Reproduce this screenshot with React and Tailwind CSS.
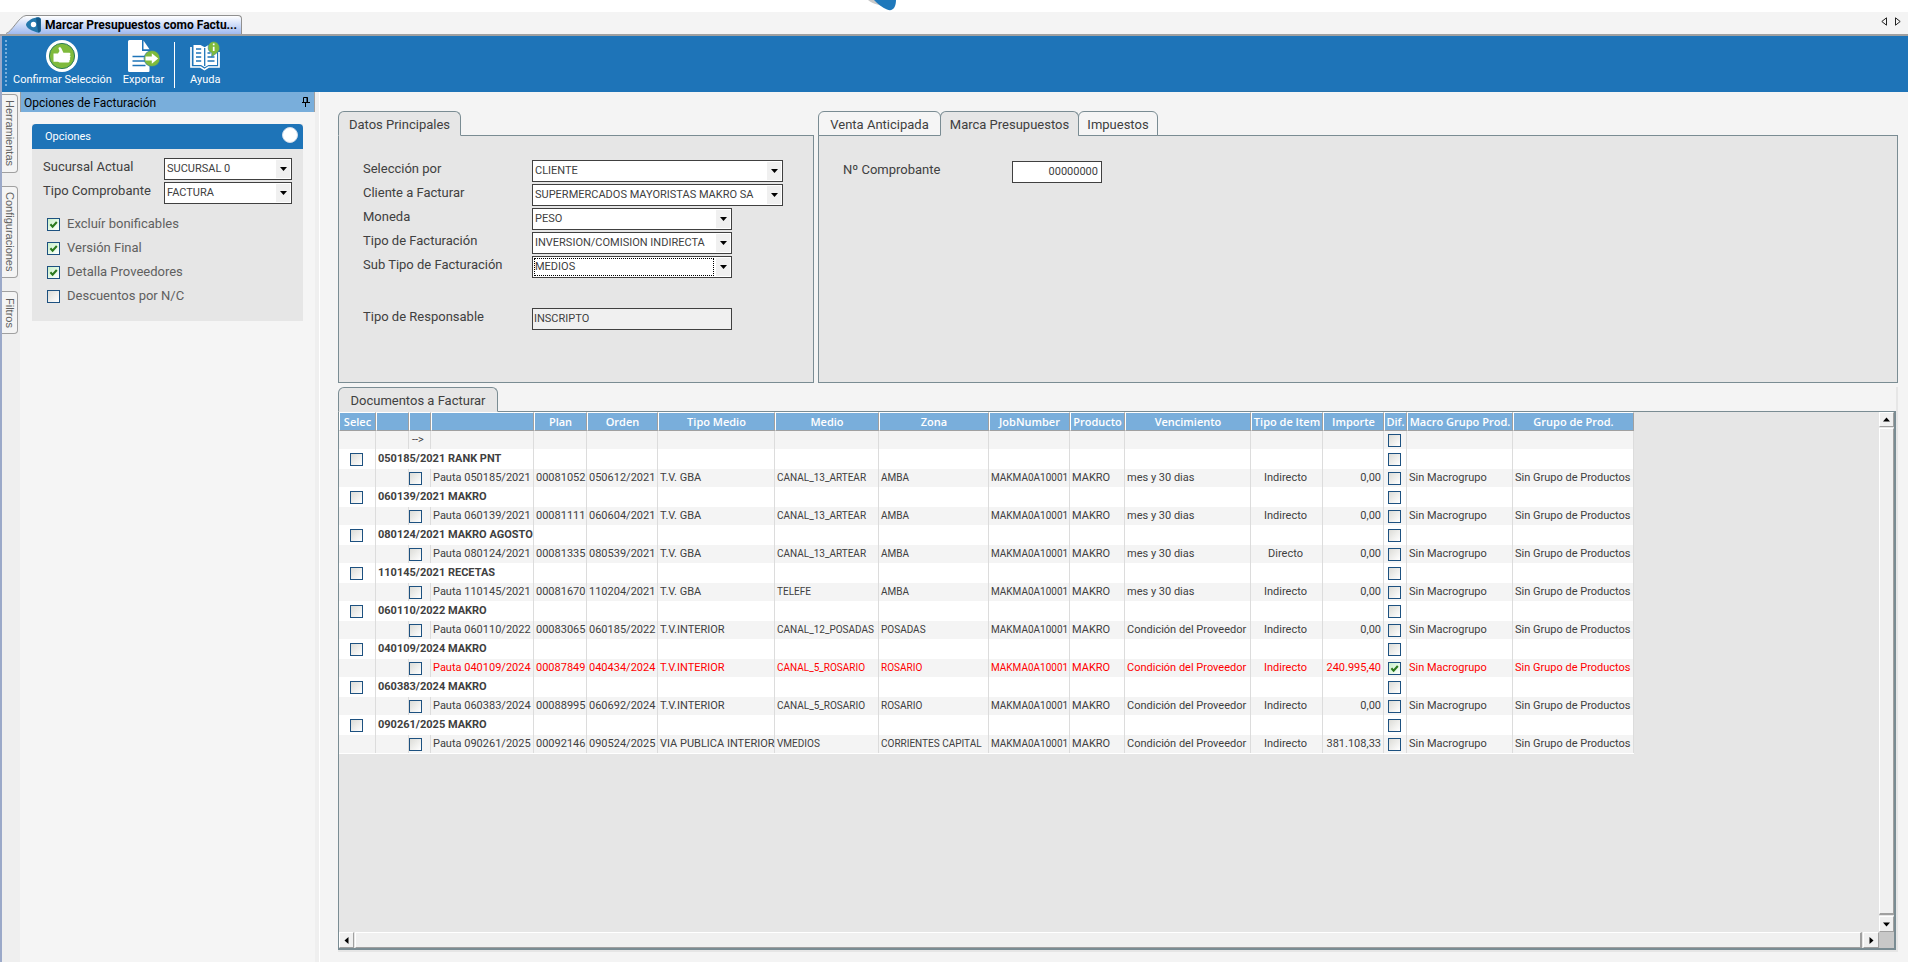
import { useState } from 'react'
import clsx from 'clsx'

const COLUMNS = [
  { key: 'selec', title: 'Selec', width: 'w-[37px]' },
  { key: 'group', title: '', width: 'w-[33px]' },
  { key: 'check', title: '', width: 'w-[22px]' },
  { key: 'pauta', title: '', width: 'w-[103px]' },
  { key: 'plan', title: 'Plan', width: 'w-[53px]' },
  { key: 'orden', title: 'Orden', width: 'w-[71px]' },
  { key: 'tipoMedio', title: 'Tipo Medio', width: 'w-[117px]' },
  { key: 'medio', title: 'Medio', width: 'w-[104px]' },
  { key: 'zona', title: 'Zona', width: 'w-[110px]' },
  { key: 'job', title: 'JobNumber', width: 'w-[81px]' },
  { key: 'producto', title: 'Producto', width: 'w-[55px]' },
  { key: 'vencimiento', title: 'Vencimiento', width: 'w-[126px]' },
  { key: 'item', title: 'Tipo de Item', width: 'w-[72px]' },
  { key: 'importe', title: 'Importe', width: 'w-[61px]' },
  { key: 'dif', title: 'Dif.', width: 'w-[23px]' },
  { key: 'macro', title: 'Macro Grupo Prod.', width: 'w-[106px]' },
  { key: 'grupo', title: 'Grupo de Prod.', width: 'w-[121px]' },
]

const PROVEEDOR = 'Condición del Proveedor'

const DOCS = [
  { id: '050185/2021', name: 'RANK PNT', plan: '00081052', orden: '050612/2021', tipo: 'T.V. GBA', medio: 'CANAL_13_ARTEAR', zona: 'AMBA', venc: 'mes y 30 dias', item: 'Indirecto', importe: '0,00' },
  { id: '060139/2021', name: 'MAKRO', plan: '00081111', orden: '060604/2021', tipo: 'T.V. GBA', medio: 'CANAL_13_ARTEAR', zona: 'AMBA', venc: 'mes y 30 dias', item: 'Indirecto', importe: '0,00' },
  { id: '080124/2021', name: 'MAKRO AGOSTO', plan: '00081335', orden: '080539/2021', tipo: 'T.V. GBA', medio: 'CANAL_13_ARTEAR', zona: 'AMBA', venc: 'mes y 30 dias', item: 'Directo', importe: '0,00' },
  { id: '110145/2021', name: 'RECETAS', plan: '00081670', orden: '110204/2021', tipo: 'T.V. GBA', medio: 'TELEFE', zona: 'AMBA', venc: 'mes y 30 dias', item: 'Indirecto', importe: '0,00' },
  { id: '060110/2022', name: 'MAKRO', plan: '00083065', orden: '060185/2022', tipo: 'T.V.INTERIOR', medio: 'CANAL_12_POSADAS', zona: 'POSADAS', venc: PROVEEDOR, item: 'Indirecto', importe: '0,00' },
  { id: '040109/2024', name: 'MAKRO', plan: '00087849', orden: '040434/2024', tipo: 'T.V.INTERIOR', medio: 'CANAL_5_ROSARIO', zona: 'ROSARIO', venc: PROVEEDOR, item: 'Indirecto', importe: '240.995,40', dif: true },
  { id: '060383/2024', name: 'MAKRO', plan: '00088995', orden: '060692/2024', tipo: 'T.V.INTERIOR', medio: 'CANAL_5_ROSARIO', zona: 'ROSARIO', venc: PROVEEDOR, item: 'Indirecto', importe: '0,00' },
  { id: '090261/2025', name: 'MAKRO', plan: '00092146', orden: '090524/2025', tipo: 'VIA PUBLICA INTERIOR', medio: 'VMEDIOS', zona: 'CORRIENTES CAPITAL', venc: PROVEEDOR, item: 'Indirecto', importe: '381.108,33' },
]

function Check({ label, defaultChecked, className, ...rest }) {
  return (
    <span className={clsx('inline-grid size-[13px] shrink-0 align-top', className)}>
      <input
        type="checkbox"
        aria-label={label}
        defaultChecked={defaultChecked}
        className="peer col-start-1 row-start-1 size-[13px] appearance-none border border-[#1d5180] bg-gradient-to-br from-[#dcdcd7] to-white checked:from-[#c8f0c8]"
        {...rest}
      />
      <svg viewBox="0 0 13 13" className="pointer-events-none invisible col-start-1 row-start-1 size-[13px] peer-checked:visible">
        <path d="M3.4 6.2 L5.6 8.6 L9.8 4" fill="none" stroke="#2b7a1e" strokeWidth="2.1" />
      </svg>
    </span>
  )
}

function Combo({ id, value, focused, className }) {
  return (
    <div className={clsx('grid h-[22px] border border-[#404040] bg-white', className)}>
      <select
        id={id}
        defaultValue={value}
        className={clsx(
          'col-start-1 row-start-1 appearance-none self-center bg-transparent text-[11px] leading-4 text-[#404040] outline-none',
          focused ? 'ml-px mr-[17px] h-[18px] border border-dotted border-black' : 'h-4 pl-0.5',
        )}
      >
        <option>{value}</option>
      </select>
      <span className="pointer-events-none col-start-1 row-start-1 m-px flex w-3.5 items-center justify-center justify-self-end bg-[#f0f0f0]">
        <svg width="7" height="4" viewBox="0 0 7 4"><path d="M0 0h7L3.5 4z" fill="#000" /></svg>
      </span>
    </div>
  )
}

function ToolButton({ label, children }) {
  return (
    <button className="flex flex-col items-center text-[11px] leading-4 text-white">
      {children}
      <span>{label}</span>
    </button>
  )
}

function ThumbIcon() {
  return (
    <svg width="32" height="32" viewBox="0 0 32 32">
      <circle cx="16" cy="16" r="16" fill="#fff" />
      <circle cx="16" cy="16" r="12.6" fill="#7fba3c" stroke="#2f7d5a" strokeWidth="1" />
      <path d="M7.500 13.500h4.500l1.500-2.500-1-2.500c0-1.800 2.300-1.600 2.900-.1l2 4.400h5.800c1.600 0 1.600 2.200.4 2.500 1.300.4 1.200 2.300.1 2.600.9.600.6 2.200-.4 2.500.5.900 0 2-1 2.100h-8.800l-1.500-.8H7.500z" fill="#fff" />
    </svg>
  )
}

function ExportIcon() {
  return (
    <svg width="32" height="32" viewBox="0 0 32 32">
      <path d="M0 1.500A1.500 1.500 0 0 1 1.500 0H14v11h7.500v20a1 1 0 0 1-1 1h-19A1.500 1.500 0 0 1 0 30.500z" fill="#fff" />
      <path d="M15.500.5 21.500 9.300h-6z" fill="#fff" />
      <path d="M4.500 16.500h13M4.500 21h13M4.500 25.500h13" stroke="#1e74b8" strokeWidth="1.400" />
      <circle cx="24" cy="18.500" r="8" fill="#7fba3c" stroke="#1e74b8" strokeWidth="0.600" />
      <path d="M17.500 16.600h6.300v-3.400l6.400 5.300-6.400 5.300v-3.400h-6.300z" fill="#fff" />
    </svg>
  )
}

function HelpIcon() {
  return (
    <svg width="32" height="32" viewBox="0 0 32 32">
      <path d="M2 7v20h9.500l4 2.600L19.500 27H30V12" fill="none" stroke="#fff" strokeWidth="1.700" />
      <path d="M4.500 5h7l4.200 2.200L19.500 5H23v5l5 2v13h-8.500l-3.800 2.300-3.700-2.300H4.500z" fill="#fff" />
      <path d="M15.700 8v18M7 9h5.200M7 13h5.200M7 17h5.200M7 21h5.200M18.500 13h3M18.500 17h7M18.500 21h7" stroke="#1e74b8" strokeWidth="1.300" />
      <path d="M24.500 1.500a6.300 6.300 0 0 1 4 11l-6 4.500.3-4a6 6 0 0 1 1.700-11.500z" fill="#7fba3c" stroke="#1e74b8" strokeWidth="0.500" />
      <path d="M24.700 3.500v1.800M24.700 6.700v4.200" stroke="#fff" strokeWidth="1.700" />
    </svg>
  )
}

function Toolbar() {
  return (
    <div className="flex h-14 shrink-0 items-start bg-[#1e74b8] pl-[3px] pt-1">
      <div className="h-[46px] border-l-2 border-dotted border-[#79aedb]" />
      <div className="ml-1.5 flex items-start gap-[11px]">
        <ToolButton label="Confirmar Selección"><ThumbIcon /></ToolButton>
        <ToolButton label="Exportar"><ExportIcon /></ToolButton>
      </div>
      <div className="ml-2.5 mt-0.5 h-[46px] w-px bg-white" />
      <div className="ml-3.5">
        <ToolButton label="Ayuda"><HelpIcon /></ToolButton>
      </div>
    </div>
  )
}

function WindowTabs() {
  return (
    <div className="flex h-6 shrink-0 items-end justify-between border-b-2 border-[#a0a0a0] bg-[#f4f4f4] pl-1.5">
      <button className="flex h-[19px] items-stretch">
        <svg width="20" height="19" viewBox="0 0 20 19" className="block">
          <defs>
            <linearGradient id="tab" x1="0" y1="0" x2="0" y2="1">
              <stop offset="0" stopColor="#fff" />
              <stop offset="1" stopColor="#9fb9ef" />
            </linearGradient>
          </defs>
          <path d="M0 19C5 18 13 1 20 .5V19z" fill="url(#tab)" />
          <path d="M0 18.500C6 17 13 1 20 .5" fill="none" stroke="#909090" />
        </svg>
        <span className="flex items-center gap-1 rounded-tr-sm border-r border-t border-[#909090] bg-gradient-to-b from-white to-[#9fb9ef] pr-1 text-[12px] font-bold leading-4 text-black">
          <svg width="15" height="16" viewBox="0 0 15 16">
            <path d="M0 7.500C1 4 8 0 13 .4c1.500 0 2 1.500 1.800 3V13c0 2-1.500 3-3.500 2.400C6 14 0 11 0 7.500z" fill="#2478ac" />
            <path d="M10 .8c3-.8 5 0 4.800 2.600V13c0 1.500-1 2.600-2.600 2.500z" fill="#155a8a" />
            <circle cx="7.500" cy="7.500" r="2.700" fill="#fff" />
          </svg>
          Marcar Presupuestos como Factu...
        </span>
      </button>
      <div className="flex gap-2 self-start pr-[7px] pt-[5px]">
        <button aria-label="Anterior"><svg width="6" height="9" viewBox="0 0 6 9"><path d="M5.500.8v7.400L.8 4.500z" fill="none" stroke="#222" /></svg></button>
        <button aria-label="Siguiente"><svg width="6" height="9" viewBox="0 0 6 9"><path d="M.5.8v7.400l4.700-3.700z" fill="none" stroke="#222" /></svg></button>
      </div>
    </div>
  )
}

function SideTab({ label, className }) {
  return (
    <button className={clsx("w-4 rounded-r border border-l-0 border-[#a0a0a0] bg-[#f4f4f4] text-[11px] leading-[14px] text-[#606060] [font-family:'Liberation_Sans',sans-serif] [writing-mode:vertical-rl]", className)}>
      {label}
    </button>
  )
}

function Option({ label, checked }) {
  return (
    <label className="flex h-6 items-center gap-[7px] text-[13px] leading-5 text-[#606060]">
      <Check defaultChecked={checked} />
      {label}
    </label>
  )
}

function Sidebar() {
  return (
    <aside className="w-[295px] shrink-0 bg-[#f5f5f5]">
      <div className="flex h-5 items-center justify-between border-x border-[#a0a0a0] bg-[#79aedb] pl-[3px] pr-1 text-[12px] leading-5 text-black">
        <h2 className="pt-0.5">Opciones de Facturación</h2>
        <button aria-label="Fijar panel">
          <svg width="8" height="10" viewBox="0 0 8 10"><path d="M1.500.5h4v5h-4zM0 5.500h8M3.500 6v4M5 .5v5" fill="none" stroke="#000" /></svg>
        </button>
      </div>
      <section className="mx-3 mt-3 bg-[#e6e6e6]">
        <div className="flex h-[25px] items-center justify-between rounded-t bg-[#1e74b8] pl-[13px] pr-[5px] text-[11px] text-white">
          <h3 className="pt-0.5">Opciones</h3>
          <button aria-label="Contraer" className="mb-1 size-4 rounded-full border border-[#d0dcea] bg-white" />
        </div>
        <div className="pb-[13px] pl-[11px] pr-[11px] pt-[9px] text-[13px] leading-[18px] text-[#404040]">
          <div className="mb-0.5 flex justify-between">
            <label htmlFor="sucursal">Sucursal Actual</label>
            <Combo id="sucursal" value="SUCURSAL 0" className="w-32" />
          </div>
          <div className="flex justify-between">
            <label htmlFor="comprobante">Tipo Comprobante</label>
            <Combo id="comprobante" value="FACTURA" className="w-32" />
          </div>
          <div className="mt-2 pl-1">
            <Option label="Excluír bonificables" checked />
            <Option label="Versión Final" checked />
            <Option label="Detalla Proveedores" checked />
            <Option label="Descuentos por N/C" />
          </div>
        </div>
      </section>
    </aside>
  )
}

function PageTab({ label, active, onClick, className }) {
  return (
    <button
      onClick={onClick}
      className={clsx(
        'h-[25px] rounded-t-md border border-[#7a8c93] pt-0.5 text-[13px] leading-5 text-[#404040]',
        active ? 'border-b-[#e6e6e6] bg-[#e6e6e6]' : 'bg-[#f5f5f5]',
        className,
      )}
    >
      {label}
    </button>
  )
}

function Field({ id, label, children, className }) {
  return (
    <div className={clsx('flex h-6', className)}>
      <label htmlFor={id} className="w-[169px] shrink-0 text-[13px] leading-[18px] text-[#404040]">{label}</label>
      {children}
    </div>
  )
}

function MainData() {
  return (
    <section className="flex w-[476px] shrink-0 flex-col">
      <div className="z-10 -mb-px flex"><PageTab label="Datos Principales" active className="w-[123px]" /></div>
      <div className="h-[248px] border border-[#7a8c93] bg-[#e6e6e6] pl-6 pt-6">
        <Field id="seleccion" label="Selección por"><Combo id="seleccion" value="CLIENTE" className="w-[251px]" /></Field>
        <Field id="cliente" label="Cliente a Facturar"><Combo id="cliente" value="SUPERMERCADOS MAYORISTAS MAKRO SA" className="w-[251px]" /></Field>
        <Field id="moneda" label="Moneda"><Combo id="moneda" value="PESO" className="w-[200px]" /></Field>
        <Field id="tipo" label="Tipo de Facturación"><Combo id="tipo" value="INVERSION/COMISION INDIRECTA" className="w-[200px]" /></Field>
        <Field id="subtipo" label="Sub Tipo de Facturación"><Combo id="subtipo" value="MEDIOS" focused className="w-[200px]" /></Field>
        <Field id="responsable" label="Tipo de Responsable" className="mt-7">
          <input id="responsable" readOnly value="INSCRIPTO" className="h-[22px] w-[200px] border border-[#404040] bg-[#f0f0f0] pb-0.5 pl-px text-[11px] text-[#404040]" />
        </Field>
      </div>
    </section>
  )
}

const BILLING_TABS = [
  { label: 'Venta Anticipada', width: 'w-[123px]' },
  { label: 'Marca Presupuestos', width: 'w-[139px]' },
  { label: 'Impuestos', width: 'w-[80px]' },
]

function Billing() {
  const [tab, setTab] = useState('Marca Presupuestos')
  return (
    <section className="flex min-w-0 flex-1 flex-col">
      <div className="z-10 -mb-px flex">
        {BILLING_TABS.map(t => (
          <PageTab key={t.label} label={t.label} active={tab === t.label} onClick={() => setTab(t.label)} className={clsx(t.width, 'not-first:-ml-px')} />
        ))}
      </div>
      <div className="h-[248px] border border-[#7a8c93] bg-[#e6e6e6] pl-6 pt-[25px]">
        <Field id="numero" label="Nº Comprobante">
          <input id="numero" defaultValue="00000000" className="h-[22px] w-[90px] border border-[#404040] bg-white pb-0.5 pr-[3px] text-right text-[11px] text-[#404040]" />
        </Field>
      </div>
    </section>
  )
}

function Cell({ children, pad = 'pl-0.5', className, ...rest }) {
  return <td className={clsx('whitespace-nowrap border-r border-[#dcdcdc]', pad, className)} {...rest}>{children}</td>
}

function CheckCell({ label, checked, center }) {
  return (
    <Cell pad={center ? 'pr-px' : 'pl-0'} className={clsx('leading-none', center && 'text-center')}>
      <Check label={label} defaultChecked={checked} />
    </Cell>
  )
}

function DocRows({ doc }) {
  return (
    <>
      <tr className="h-5 bg-white">
        <CheckCell center label={`Seleccionar ${doc.id}`} />
        <Cell colSpan={3} className="font-bold">{doc.id} {doc.name}</Cell>
        {COLUMNS.slice(4, 14).map(c => <Cell key={c.key} />)}
        <CheckCell center label={`Dif. ${doc.id}`} />
        <Cell />
        <Cell />
      </tr>
      <tr className={clsx('h-[18px] bg-[#f4f4f4]', doc.dif && 'text-[#ff0000]')}>
        <Cell />
        <Cell />
        <CheckCell label={`Pauta ${doc.id}`} />
        <Cell>Pauta {doc.id}</Cell>
        <Cell>{doc.plan}</Cell>
        <Cell>{doc.orden}</Cell>
        <Cell>{doc.tipo}</Cell>
        {/* long all-caps values, one step smaller to stay in their column */}
        <Cell className="text-[10px]">{doc.medio}</Cell>
        <Cell className="text-[10px]">{doc.zona}</Cell>
        <Cell className="text-[10px]">MAKMA0A10001</Cell>
        <Cell>MAKRO</Cell>
        <Cell>{doc.venc}</Cell>
        <Cell pad="pr-0.5" className="text-center">{doc.item}</Cell>
        <Cell pad="pr-0.5" className="text-right">{doc.importe}</Cell>
        <CheckCell center label={`Dif. Pauta ${doc.id}`} checked={doc.dif} />
        <Cell>Sin Macrogrupo</Cell>
        <Cell>Sin Grupo de Productos</Cell>
      </tr>
    </>
  )
}

function DocsTable() {
  return (
    <table className="w-[1295px] table-fixed border-separate border-spacing-0 border-b border-white text-[11px] leading-4 text-[#404040]">
      <colgroup>{COLUMNS.map(c => <col key={c.key} className={c.width} />)}</colgroup>
      <thead>
        <tr>
          {COLUMNS.map(c => (
            <th key={c.key} className="h-[19px] whitespace-nowrap border border-b-[#a0a0a0] border-l-white border-r-[#a0a0a0] border-t-white bg-[#79aedb] p-0 font-semibold text-white [font-family:'Open_Sans',sans-serif]">
              {c.title}
            </th>
          ))}
        </tr>
      </thead>
      <tbody>
        <tr className="h-[18px] bg-[#f4f4f4]">
          <Cell />
          <Cell />
          <Cell pad="pl-[3px]">--&gt;</Cell>
          {COLUMNS.slice(3, 14).map(c => <Cell key={c.key} />)}
          <CheckCell center label="Dif. general" />
          <Cell />
          <Cell />
        </tr>
        {DOCS.map(d => <DocRows key={d.id} doc={d} />)}
      </tbody>
    </table>
  )
}

const bevel = 'border border-b-[#a0a0a0] border-l-white border-r-[#a0a0a0] border-t-white bg-[#f0f0f0]'

function ScrollButton({ label, d, className }) {
  return (
    <button aria-label={label} className={clsx('flex shrink-0 items-center justify-center', bevel, className)}>
      <svg width="7" height="7" viewBox="0 0 7 7"><path d={d} fill="#000" /></svg>
    </button>
  )
}

function Documents() {
  return (
    <section className="mt-1 flex min-h-0 flex-1 flex-col border-b-2 border-r-2 border-[#e6e6e6]">
      <div className="z-10 -mb-px flex"><PageTab label="Documentos a Facturar" active className="w-40" /></div>
      <div className="flex min-h-0 flex-1 flex-col border border-b-2 border-r-2 border-[#7a8c93] bg-[#e6e6e6]">
        <div className="flex min-h-0 flex-1">
          <div className="min-w-0 flex-1 overflow-hidden"><DocsTable /></div>
          <div className="flex w-[15px] flex-col gap-px">
            <ScrollButton label="Subir" d="M0 5.500h7L3.500 1.500z" className="h-[15px]" />
            <div className={clsx('flex-1 border-b-2', bevel)} />
            <ScrollButton label="Bajar" d="M0 1.500h7L3.500 5.500z" className="h-4" />
          </div>
        </div>
        <div className="flex h-4">
          <ScrollButton label="Izquierda" d="M5.500 0v7L1.500 3.500z" className="w-[15px]" />
          <div className={clsx('ml-px flex-1 border-r-2', bevel)} />
          <ScrollButton label="Derecha" d="M1.500 0v7L5.500 3.500z" className="ml-px w-4" />
          <div className="w-[15px] bg-[#c8c8c8]" />
        </div>
      </div>
    </section>
  )
}

export default function App() {
  return (
    <div className="flex h-screen flex-col bg-[#f4f4f4] [font-family:Roboto,'Open_Sans',sans-serif]">
      <header className="flex h-3 shrink-0 justify-center overflow-hidden bg-white">
        <svg width="30" height="12" viewBox="0 0 30 12" className="mr-[142px]">
          <path d="M0 0h10l9 6c-6 0-14-2-19-6z" fill="#c8c8c8" />
          <path d="M6 0h22c0 7-3 12-9 9.500C14 7.500 10 4 6 0z" fill="#1e78bb" />
        </svg>
      </header>
      <WindowTabs />
      <div className="flex min-h-0 flex-1 flex-col border-l-2 border-[#9ba9c9]">
        <Toolbar />
        <div className="flex min-h-0 flex-1">
          <nav className="flex w-[18px] shrink-0 flex-col gap-[13px] bg-[#efefef] pt-0.5">
            <SideTab label="Herramientas" className="h-[79px]" />
            <SideTab label="Configuraciones" className="h-[92px]" />
            <SideTab label="Filtros" className="h-[43px]" />
          </nav>
          <Sidebar />
          <div className="w-[5px] shrink-0 border-r border-white bg-[#efefef]" />
          <main className="flex min-w-0 flex-1 flex-col pb-2.5 pl-[18px] pr-2.5 pt-[19px]">
            <div className="flex gap-1">
              <MainData />
              <Billing />
            </div>
            <Documents />
          </main>
        </div>
      </div>
    </div>
  )
}
